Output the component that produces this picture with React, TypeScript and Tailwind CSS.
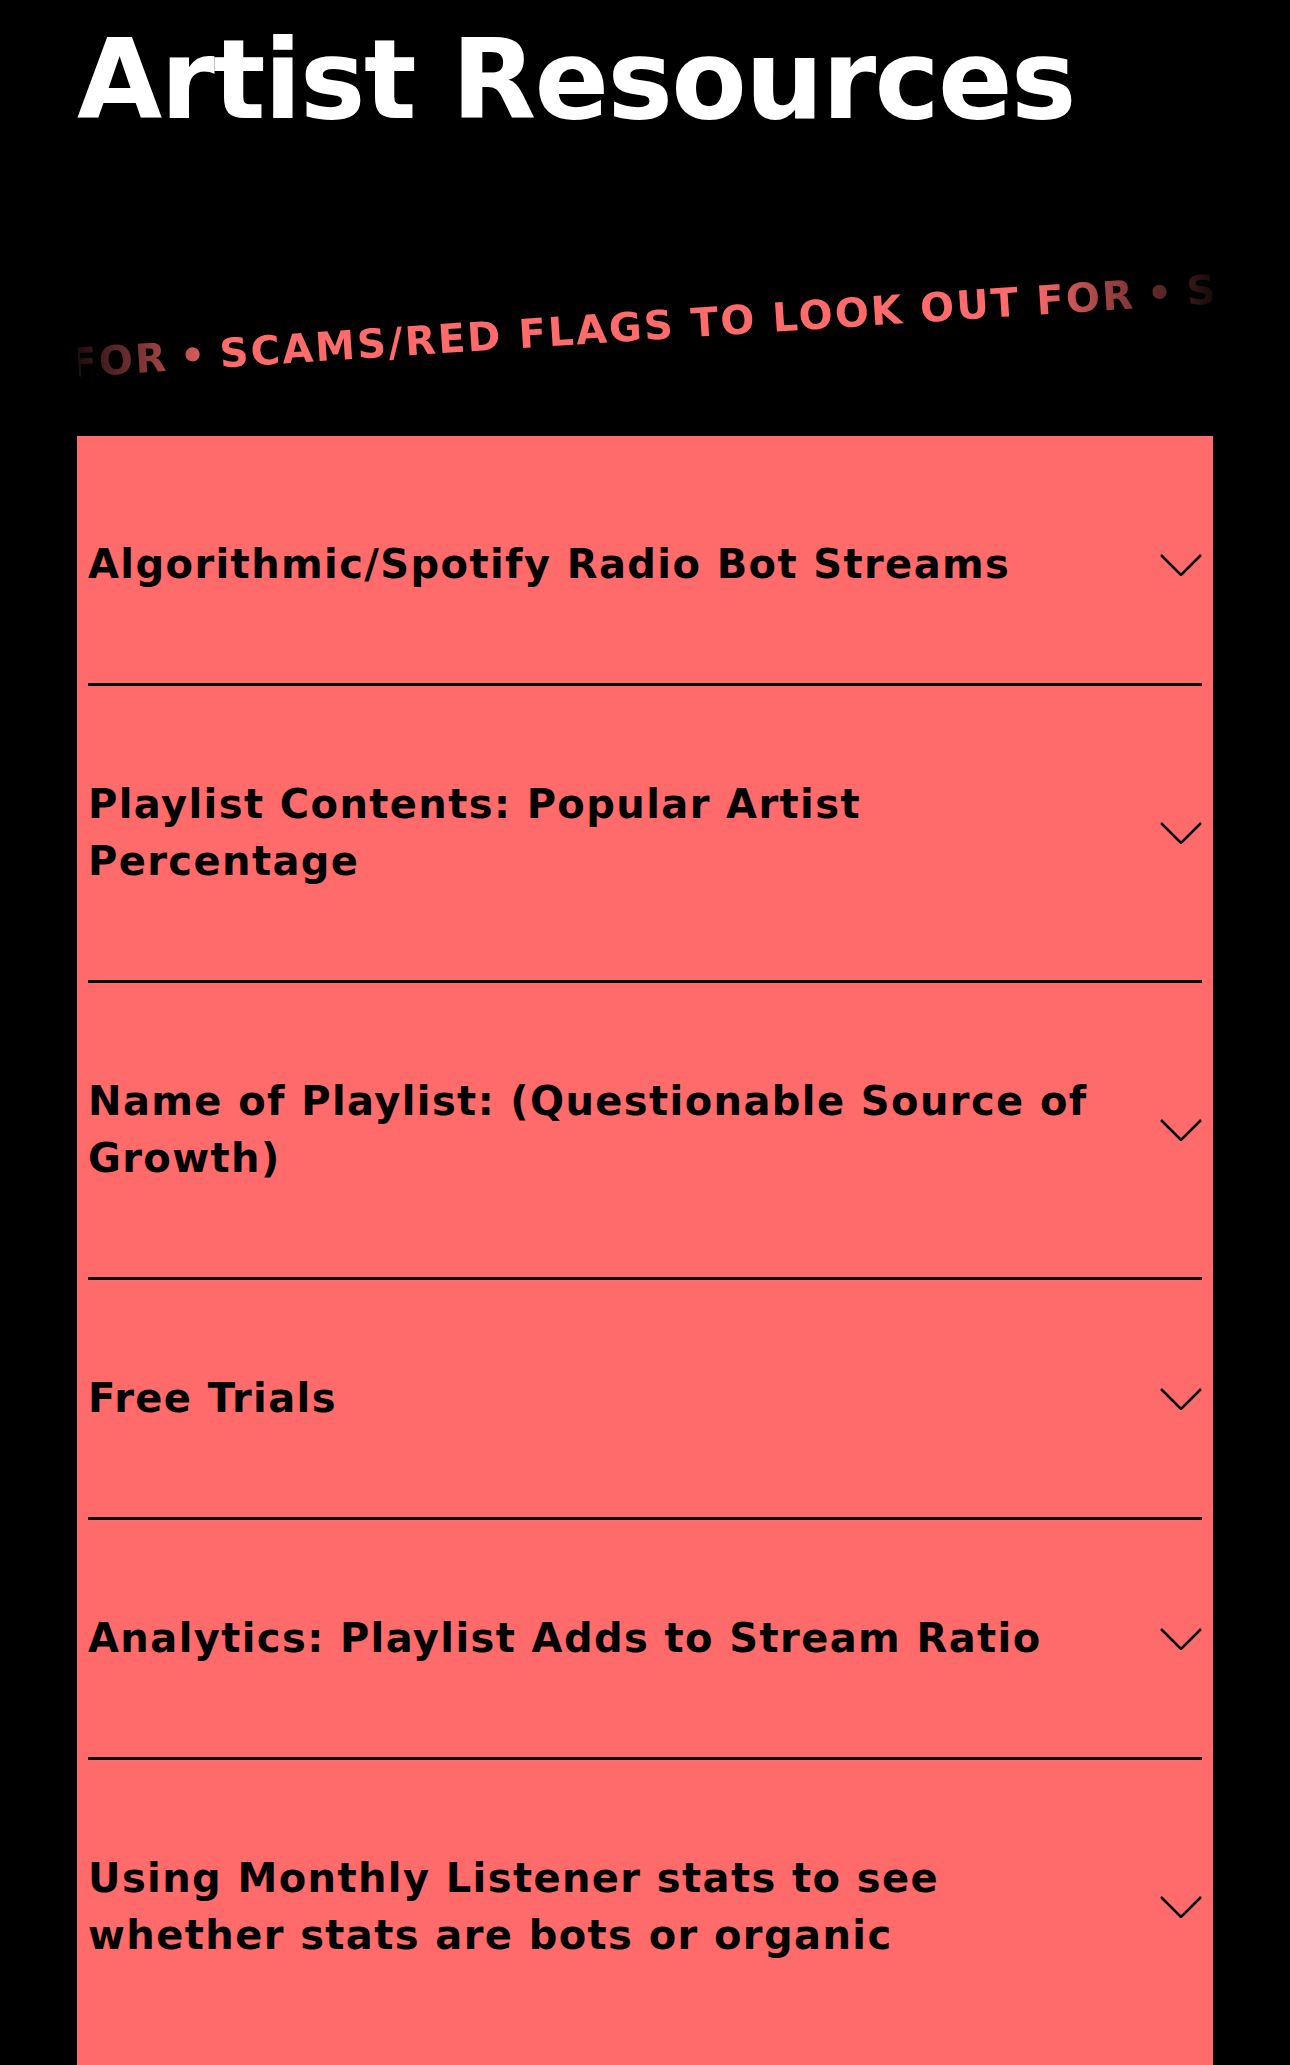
import { useState } from 'react';

const ITEMS = [
  'Algorithmic/Spotify Radio Bot Streams',
  'Playlist Contents: Popular Artist Percentage',
  'Name of Playlist: (Questionable Source of Growth)',
  'Free Trials',
  'Analytics: Playlist Adds to Stream Ratio',
  'Using Monthly Listener stats to see whether stats are bots or organic',
];

const PHRASE = 'SCAMS/RED FLAGS TO LOOK OUT FOR';

function Chevron({ open }: { open: boolean }) {
  return (
    <svg
      viewBox="0 0 42 22"
      className={open ? 'w-[42px] h-[22px] shrink-0 rotate-180' : 'w-[42px] h-[22px] shrink-0'}
      fill="none"
      stroke="currentColor"
      strokeWidth={2.5}
    >
      <polyline points="1,1 21,21 41,1" />
    </svg>
  );
}

// tilted marquee strip, faded at both ends
function Ticker() {
  return (
    <div className="h-[301px] pt-[80px] flex items-center">
      <div className="w-full rotate-[-3.7deg]">
        <div className="overflow-hidden [mask-image:linear-gradient(to_right,rgba(0,0,0,0.12)_0%,#000_13%,#000_84%,rgba(0,0,0,0.1)_100%)]">
          <div className="flex items-center gap-[12px] whitespace-nowrap text-[40px] font-bold uppercase tracking-[0.055em] text-[#ff6b6b] leading-none">
            <span className="flex w-[90px] shrink-0 justify-end">
              <span>{PHRASE}</span>
            </span>
            <span>•</span>
            <span>{PHRASE}</span>
            <span>•</span>
            <span>{PHRASE}</span>
          </div>
        </div>
      </div>
    </div>
  );
}

export default function App() {
  const [open, setOpen] = useState<number | null>(null);

  return (
    <div className="min-h-screen bg-black px-[77px] font-['DejaVu_Sans',sans-serif]">
      <h1 className="pt-[25px] text-[110px] font-bold leading-none tracking-[-0.015em] text-white">
        Artist Resources
      </h1>

      <Ticker />

      <div className="bg-[#ff6b6b] px-[11px] pt-[10px] pb-[160px]">
        {ITEMS.map((item, i) => (
          <div key={item} className={i < ITEMS.length - 1 ? 'border-b-[3px] border-black' : ''}>
            <button
              onClick={() => setOpen(open === i ? null : i)}
              className="flex w-full items-center justify-between gap-8 py-[90px] text-left text-black"
            >
              <span className="max-w-[1020px] text-[40px] font-bold leading-[57px] tracking-[0.035em]">
                {item}
              </span>
              <Chevron open={open === i} />
            </button>
          </div>
        ))}
      </div>
    </div>
  );
}
